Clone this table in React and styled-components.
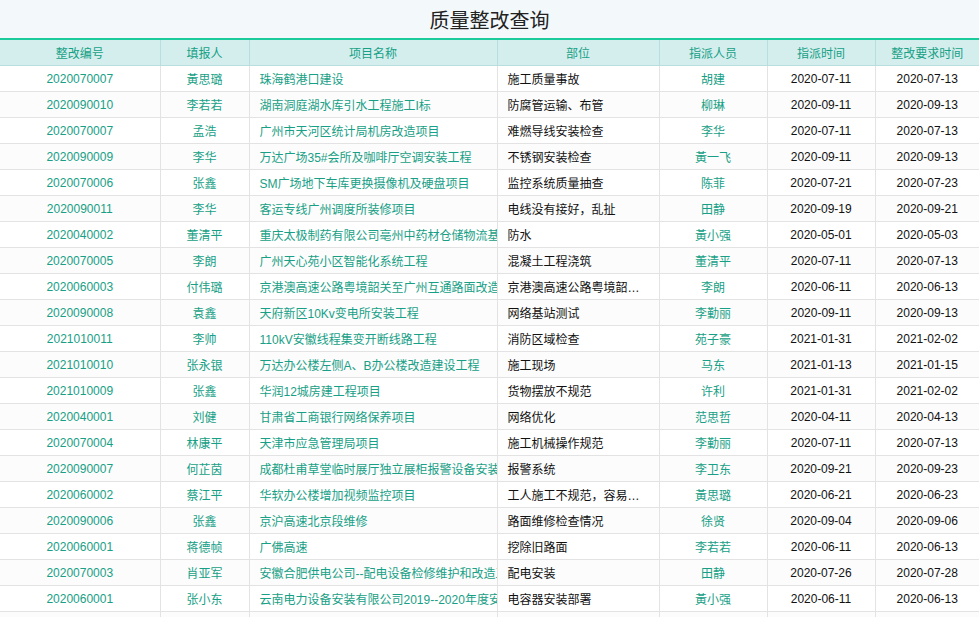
import React from 'react';
import styled, { createGlobalStyle } from 'styled-components';

const GlobalStyle = createGlobalStyle`
  html, body {
    margin: 0;
    padding: 0;
    background: #ffffff;
    overflow: hidden;
  }
  body {
    font-family: "Liberation Sans", "Noto Sans CJK SC", sans-serif;
  }
`;

const Page = styled.div`
  width: 979px;
  height: 617px;
  overflow: hidden;
  background: #fff;
`;

const TitleBar = styled.div`
  height: 38px;
  background: #f3f8fb;
  display: flex;
  align-items: center;
  justify-content: center;
  font-family: "Noto Sans CJK SC", sans-serif;
  font-size: 20px;
  color: #222;
  border-bottom: 2px solid #1ccb9b;
`;

const Table = styled.table`
  width: 979px;
  border-collapse: collapse;
  table-layout: fixed;
  font-size: 12px;
`;

const Th = styled.th`
  height: 25px;
  padding: 0;
  background: #d4eeee;
  color: #16a085;
  font-weight: normal;
  font-size: 12px;
  text-align: center;
  border-left: 1px solid #b9dede;
  border-bottom: 1px solid #b9dede;
  font-family: "Noto Sans CJK SC", sans-serif;
  &:first-child {
    border-left: none;
  }
`;

const Row = styled.tr`
  background: ${(p) => (p.$odd ? '#fcfcfc' : '#ffffff')};
`;

const Td = styled.td`
  height: 25px;
  padding: ${(p) => (p.$left ? (p.$ellipsis ? '0 14px 0 10px' : '0 0 0 10px') : '0 4px')};
  border-left: 1px solid #e3e3e3;
  border-bottom: 1px solid #e3e3e3;
  text-align: ${(p) => (p.$left ? 'left' : 'center')};
  color: ${(p) => (p.$green ? '#17a086' : '#111')};
  white-space: nowrap;
  overflow: hidden;
  text-overflow: ${(p) => (p.$ellipsis ? 'ellipsis' : 'clip')};
  &:first-child {
    border-left: none;
  }
`;

const columns = [
  { title: '整改编号', width: 160 },
  { title: '填报人', width: 89 },
  { title: '项目名称', width: 248 },
  { title: '部位', width: 162 },
  { title: '指派人员', width: 108 },
  { title: '指派时间', width: 108 },
  { title: '整改要求时间', width: 104 },
];

const rows = [
  ['2020070007', '黃思璐', '珠海鹤港口建设', '施工质量事故', '胡建', '2020-07-11', '2020-07-13'],
  ['2020090010', '李若若', '湖南洞庭湖水库引水工程施工I标', '防腐管运输、布管', '柳琳', '2020-09-11', '2020-09-13'],
  ['2020070007', '孟浩', '广州市天河区统计局机房改造项目', '难燃导线安装检查', '李华', '2020-07-11', '2020-07-13'],
  ['2020090009', '李华', '万达广场35#会所及咖啡厅空调安装工程', '不锈钢安装检查', '黃一飞', '2020-09-11', '2020-09-13'],
  ['2020070006', '张鑫', 'SM广场地下车库更换摄像机及硬盘项目', '监控系统质量抽查', '陈菲', '2020-07-21', '2020-07-23'],
  ['2020090011', '李华', '客运专线广州调度所装修项目', '电线没有接好，乱扯', '田静', '2020-09-19', '2020-09-21'],
  ['2020040002', '董清平', '重庆太极制药有限公司亳州中药材仓储物流基地项目', '防水', '黃小强', '2020-05-01', '2020-05-03'],
  ['2020070005', '李朗', '广州天心苑小区智能化系统工程', '混凝土工程浇筑', '董清平', '2020-07-11', '2020-07-13'],
  ['2020060003', '付伟璐', '京港澳高速公路粤境韶关至广州互通路面改造工程', '京港澳高速公路粤境韶关至广州', '李朗', '2020-06-11', '2020-06-13'],
  ['2020090008', '袁鑫', '天府新区10Kv变电所安装工程', '网络基站测试', '李勤丽', '2020-09-11', '2020-09-13'],
  ['2021010011', '李帅', '110kV安徽线程集变开断线路工程', '消防区域检查', '苑子豪', '2021-01-31', '2021-02-02'],
  ['2021010010', '张永银', '万达办公楼左侧A、B办公楼改造建设工程', '施工现场', '马东', '2021-01-13', '2021-01-15'],
  ['2021010009', '张鑫', '华润12城房建工程项目', '货物摆放不规范', '许利', '2021-01-31', '2021-02-02'],
  ['2020040001', '刘健', '甘肃省工商银行网络保养项目', '网络优化', '范思哲', '2020-04-11', '2020-04-13'],
  ['2020070004', '林康平', '天津市应急管理局项目', '施工机械操作规范', '李勤丽', '2020-07-11', '2020-07-13'],
  ['2020090007', '何芷茵', '成都杜甫草堂临时展厅独立展柜报警设备安装工程', '报警系统', '李卫东', '2020-09-21', '2020-09-23'],
  ['2020060002', '蔡江平', '华软办公楼增加视频监控项目', '工人施工不规范，容易发生事故', '黃思璐', '2020-06-21', '2020-06-23'],
  ['2020090006', '张鑫', '京沪高速北京段维修', '路面维修检查情况', '徐贤', '2020-09-04', '2020-09-06'],
  ['2020060001', '蒋德帧', '广佛高速', '挖除旧路面', '李若若', '2020-06-11', '2020-06-13'],
  ['2020070003', '肖亚军', '安徽合肥供电公司--配电设备检修维护和改造工程', '配电安装', '田静', '2020-07-26', '2020-07-28'],
  ['2020060001', '张小东', '云南电力设备安装有限公司2019--2020年度安装工程', '电容器安装部署', '黃小强', '2020-06-11', '2020-06-13'],
  ['', '', '', '', '', '', ''],
];

const App = () => {
  return (
    <Page>
      <GlobalStyle />
      <TitleBar>质量整改查询</TitleBar>
      <Table>
        <colgroup>
          {columns.map((c) => (
            <col key={c.title} style={{ width: c.width }} />
          ))}
        </colgroup>
        <thead>
          <tr>
            {columns.map((c) => (
              <Th key={c.title}>{c.title}</Th>
            ))}
          </tr>
        </thead>
        <tbody>
          {rows.map((r, i) => (
            <Row key={i} $odd={i % 2 === 1}>
              <Td $green>{r[0]}</Td>
              <Td $green>{r[1]}</Td>
              <Td $green $left>{r[2]}</Td>
              <Td $left $ellipsis>{r[3]}</Td>
              <Td $green>{r[4]}</Td>
              <Td>{r[5]}</Td>
              <Td>{r[6]}</Td>
            </Row>
          ))}
        </tbody>
      </Table>
    </Page>
  );
};

export default App;
